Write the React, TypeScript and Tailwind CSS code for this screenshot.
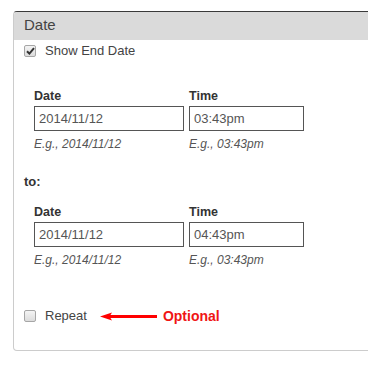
import React from 'react';

const Box: React.FC<{ checked?: boolean }> = ({ checked }) => (
  <span className="flex h-[12px] w-[12px] shrink-0 items-center justify-center rounded-[2px] border border-[#a6a6a6] bg-gradient-to-b from-[#f4f4f4] to-[#dcdcdc]">
    {checked && (
      <svg width="9" height="8" viewBox="0 0 9 8">
        <path d="M1 4.2 L3.4 6.6 L8 1.2" fill="none" stroke="#333" strokeWidth="2" />
      </svg>
    )}
  </span>
);

const DateTime: React.FC<{ date: string; time: string; className: string }> = ({ date, time, className }) => (
  <div className={`grid grid-cols-[155px_115px] pl-[20px] ${className}`}>
    <div>
      <div className="text-[12.5px] font-bold leading-[16px] text-[#333]">Date</div>
      <div className="mt-[2px] flex h-[25px] w-[150px] items-center border border-[#555] pl-[4px] text-[13px] text-[#555]">
        {date}
      </div>
      <div className="mt-[5px] text-[12px] italic leading-[16px] text-[#555]">E.g., 2014/11/12</div>
    </div>
    <div>
      <div className="text-[12.5px] font-bold leading-[16px] text-[#333]">Time</div>
      <div className="mt-[2px] flex h-[25px] w-[115px] items-center border border-[#555] pl-[4px] text-[13px] text-[#555]">
        {time}
      </div>
      <div className="mt-[5px] text-[12px] italic leading-[16px] text-[#555]">E.g., 03:43pm</div>
    </div>
  </div>
);

const App: React.FC = () => {
  return (
    <div className="h-[367px] w-[368px] overflow-hidden bg-white pl-[13px] pt-[11px] font-['Liberation_Sans',Arial,sans-serif]">
      <div className="h-[340px] w-[400px] rounded-[4px] border border-[#cccccc] border-t-[#3a3a3a]">
        <div className="h-[28px] rounded-t-[3px] bg-[#dadada] pl-[10px] text-[15px] leading-[25px] text-[#444]">Date</div>

        <div className="mt-[3px] flex items-center gap-[9px] pl-[10px] text-[13px] leading-[16px] text-[#444]">
          <Box checked />
          <span>Show End Date</span>
        </div>

        <DateTime date="2014/11/12" time="03:43pm" className="mt-[29px]" />

        <div className="mt-[22px] pl-[10px] text-[13px] font-bold leading-[16px] text-[#333]">to:</div>

        <DateTime date="2014/11/12" time="04:43pm" className="mt-[14px]" />

        <div className="mt-[40px] flex items-center pl-[10px] text-[13px] leading-[16px] text-[#444]">
          <Box />
          <span className="ml-[9px]">Repeat</span>
          <svg className="ml-[13px]" width="57" height="9" viewBox="0 0 57 9">
            <path d="M0 4.5 L12 0.5 L9.5 4.5 L12 8.5 Z" fill="#f00" />
            <rect x="9" y="3" width="48" height="3" fill="#f00" />
          </svg>
          <span className="ml-[6px] text-[14px] font-bold text-[#f01515]">Optional</span>
        </div>
      </div>
    </div>
  );
};

export default App;
